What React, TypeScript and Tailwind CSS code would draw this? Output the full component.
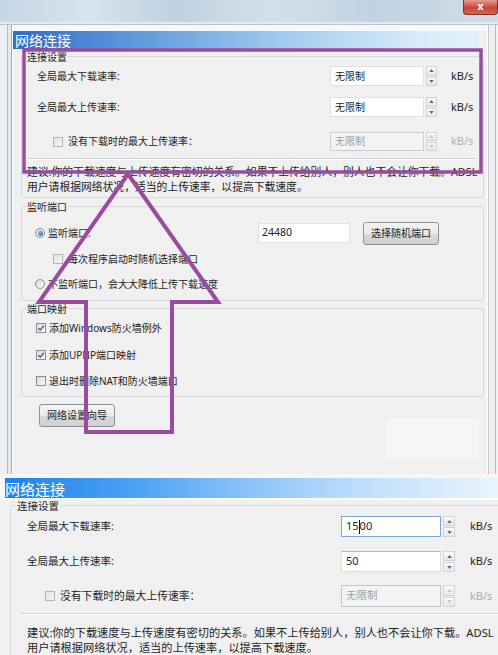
import React from "react";

const FONT = "font-['Noto_Sans','Noto_Sans_CJK_SC',sans-serif]";

function Check({ checked = false, disabled = false }: { checked?: boolean; disabled?: boolean }) {
  return (
    <span
      className={
        disabled
          ? "w-[10px] h-[10px] shrink-0 border border-[#b4b4b4] bg-[linear-gradient(135deg,#e2e2e2,#f6f6f6)] flex items-center justify-center"
          : "w-[10px] h-[10px] shrink-0 border border-[#8a8c8e] bg-[linear-gradient(135deg,#d8dadc,#fbfbfb)] flex items-center justify-center"
      }
    >
      {checked && (
        <svg viewBox="0 0 10 10" className="w-[8px] h-[8px]">
          <path d="M1.6 5.2 L4 7.6 L8.6 2.2" stroke="#35589a" strokeWidth="1.7" fill="none" />
        </svg>
      )}
    </span>
  );
}

function Radio({ checked = false }: { checked?: boolean }) {
  return (
    <span className="w-[10px] h-[10px] shrink-0 rounded-full border border-[#8a8c8e] bg-[linear-gradient(135deg,#d6d8da,#fbfbfb)] flex items-center justify-center">
      {checked && <span className="w-[5px] h-[5px] rounded-full bg-[radial-gradient(circle_at_35%_35%,#8ab4ee,#2b55a8)]" />}
    </span>
  );
}

function Spin({ h, w, disabled = false }: { h: string; w: string; disabled?: boolean }) {
  const arrow = disabled ? "#c4c4c4" : "#56688c";
  return (
    <div className={`${h} ${w} flex flex-col gap-[1px] shrink-0`}>
      <div className="flex-1 border border-[#cfd2d6] bg-[linear-gradient(#fbfbfb,#e6e7e9)] flex items-center justify-center">
        <svg viewBox="0 0 6 4" className="w-[5px] h-[3px]">
          <path d="M0 4 L3 0 L6 4 Z" fill={arrow} />
        </svg>
      </div>
      <div className="flex-1 border border-[#cfd2d6] bg-[linear-gradient(#fbfbfb,#e6e7e9)] flex items-center justify-center">
        <svg viewBox="0 0 6 4" className="w-[5px] h-[3px]">
          <path d="M0 0 L3 4 L6 0 Z" fill={arrow} />
        </svg>
      </div>
    </div>
  );
}

function TopShot() {
  return (
    <div className="h-[474px] flex flex-col">
      {/* glass title */}
      <div className="h-[22px] flex justify-end bg-[linear-gradient(90deg,#c4d6e5,#d8e4ee_18%,#bfd1e0_35%,#d3e0ea_55%,#c0d3e2_75%,#cfdde8)]">
        <div className="w-[35px] h-[15px] rounded-b-[4px] border border-t-0 border-[#7a3326] bg-[linear-gradient(#e49a8c,#c8463a_55%,#d8624f)] flex items-center justify-center text-white text-[10px] font-bold leading-none font-['DejaVu_Sans',sans-serif]">
          x
        </div>
      </div>
      <div className="h-[3px] bg-[#e3ebf2] border-b border-[#b9c3cc]" />
      <div className="flex-1 flex">
        {/* left frame */}
        <div className="w-[13px] flex">
          <div className="w-[7px] bg-[#eceff1]" />
          <div className="w-[1px] bg-[#b5bbc1]" />
          <div className="w-[3px] bg-[#e6e9ec]" />
          <div className="w-[1px] bg-[#a6acb2]" />
          <div className="w-[1px] bg-white" />
        </div>
        {/* content */}
        <div className="flex-1 flex flex-col bg-[#f0f0f0]">
          <div className="h-[6px] bg-[#f6f7f8]" />
          <div className="h-[18px] mr-[9px] bg-[linear-gradient(90deg,#2f6ec8,#5c97dc_25%,#9ac6ee_55%,#d4ebf9_85%,#e2f1fb)] flex items-center pl-[2px] text-white text-[14px] leading-none">
            网络连接
          </div>
          <div className={`flex-1 flex flex-col text-[10px] text-[#222] ${FONT}`}>
            {/* group 1 */}
            <div className="mt-[7px] ml-[8px] mr-[3px] border border-[#d5d9dd] rounded-[3px] flex flex-col">
              <div className="-mt-[7px] h-[14px] leading-[14px] ml-[4px] px-[1px] self-start bg-[#f0f0f0]">连接设置</div>
              <div className="mt-[2px] h-[20px] flex items-center pl-[15px]">
                <span className="w-[293px]">全局最大下载速率:</span>
                <div className="w-[94px] h-[20px] bg-white border border-[#e0e0e0] flex items-center pl-[4px]">无限制</div>
                <div className="ml-[2px]"><Spin h="h-[20px]" w="w-[11px]" /></div>
                <span className="ml-[14px] text-[11px]">kB/s</span>
              </div>
              <div className="mt-[11px] h-[20px] flex items-center pl-[15px]">
                <span className="w-[293px]">全局最大上传速率:</span>
                <div className="w-[94px] h-[20px] bg-white border border-[#e0e0e0] flex items-center pl-[4px]">无限制</div>
                <div className="ml-[2px]"><Spin h="h-[20px]" w="w-[11px]" /></div>
                <span className="ml-[14px] text-[11px]">kB/s</span>
              </div>
              <div className="mt-[15px] h-[19px] flex items-center pl-[31px]">
                <div className="w-[277px] flex items-center gap-[5px]">
                  <Check disabled />
                  <span>没有下载时的最大上传速率：</span>
                </div>
                <div className="w-[94px] h-[19px] bg-[#f3f3f3] border border-[#c9cccf] flex items-center pl-[4px] text-[#a0a0a0]">无限制</div>
                <div className="ml-[2px]"><Spin h="h-[19px]" w="w-[11px]" disabled /></div>
                <span className="ml-[14px] text-[11px] text-[#b0b0b0]">kB/s</span>
              </div>
              <div className="mt-[7px] ml-[5px] mr-[8px] border-t border-[#d3d3d3] border-b border-b-white" />
              <div className="mt-[4px] ml-[5px] leading-[15px] whitespace-nowrap text-[10.8px]">
                <div>建议:你的下载速度与上传速度有密切的关系。如果不上传给别人，别人也不会让你下载。ADSL</div>
                <div>用户请根据网络状况，适当的上传速率，以提高下载速度。</div>
              </div>
              <div className="h-[3px]" />
            </div>
            {/* group 2 */}
            <div className="mt-[8px] ml-[8px] mr-[3px] border border-[#d5d9dd] rounded-[3px] flex flex-col">
              <div className="-mt-[7px] h-[14px] leading-[14px] ml-[4px] px-[1px] self-start bg-[#f0f0f0]">监听端口</div>
              <div className="mt-[7px] h-[24px] flex items-center pl-[13px]">
                <div className="w-[223px] flex items-center gap-[3px]">
                  <Radio checked />
                  <span>监听端口:</span>
                </div>
                <div className="w-[92px] h-[20px] bg-white border border-[#e0e0e0] flex items-center pl-[3px] text-[10.5px]">24480</div>
                <div className="ml-[13px] w-[76px] h-[23px] rounded-[3px] border border-[#8e9194] bg-[linear-gradient(#f4f4f4,#e9e9e9_50%,#d9d9d9_51%,#d0d0d0)] flex items-center justify-center">
                  选择随机端口
                </div>
              </div>
              <div className="mt-[6px] h-[16px] flex items-center pl-[31px] gap-[5px]">
                <Check disabled />
                <span>每次程序启动时随机选择端口</span>
              </div>
              <div className="mt-[9px] h-[16px] flex items-center pl-[13px] gap-[3px]">
                <Radio />
                <span>不监听端口，会大大降低上传下载速度</span>
              </div>
              <div className="h-[8px]" />
            </div>
            {/* group 3 */}
            <div className="mt-[7px] ml-[8px] mr-[3px] border border-[#d5d9dd] rounded-[3px] flex flex-col">
              <div className="-mt-[7px] h-[14px] leading-[14px] ml-[4px] px-[1px] self-start bg-[#f0f0f0]">端口映射</div>
              <div className="mt-[4px] h-[16px] flex items-center pl-[14px] gap-[3px]">
                <Check checked />
                <span>添加Windows防火墙例外</span>
              </div>
              <div className="mt-[11px] h-[16px] flex items-center pl-[14px] gap-[3px]">
                <Check checked />
                <span>添加UPNP端口映射</span>
              </div>
              <div className="mt-[10px] h-[16px] flex items-center pl-[14px] gap-[3px]">
                <Check />
                <span>退出时删除NAT和防火墙端口</span>
              </div>
              <div className="h-[7px]" />
            </div>
            <div className="mt-[7px] ml-[26px] w-[76px] h-[23px] rounded-[3px] border border-[#8e9194] bg-[linear-gradient(#f4f4f4,#e9e9e9_50%,#d9d9d9_51%,#d0d0d0)] flex items-center justify-center">
              网络设置向导
            </div>
          </div>
        </div>
        {/* right frame */}
        <div className="w-[11px] flex">
          <div className="w-[1px] bg-white" />
          <div className="w-[1px] bg-[#c7cbcf]" />
          <div className="w-[6px] bg-[#eef0f2]" />
          <div className="w-[1px] bg-[#b5bbc1]" />
          <div className="w-[2px] bg-[#f0f2f4]" />
        </div>
      </div>
    </div>
  );
}

function BottomShot() {
  return (
    <div className="flex-1 flex flex-col bg-[#f0f0f0]">
      <div className="h-[4px] bg-[#f7f7f7]" />
      <div className="h-[20px] flex">
        <div className="w-[5px] bg-[#f7f7f7]" />
        <div className="flex-1 bg-[linear-gradient(90deg,#1c82ee,#4aa0f4_25%,#8cc4f8_50%,#c4e1fb_75%,#e9f4fd)] flex items-center text-white text-[15px] leading-none">
          网络连接
        </div>
      </div>
      <div className="h-[2px] bg-white" />
      <div className={`flex-1 flex flex-col text-[10.5px] text-[#1e1e1e] ${FONT}`}>
        <div className="mt-[5px] ml-[10px] border border-r-0 border-b-0 border-[#d5d9dd] rounded-tl-[3px] flex flex-col">
          <div className="-mt-[7px] h-[14px] leading-[14px] ml-[5px] px-[1px] self-start bg-[#f0f0f0]">连接设置</div>
          <div className="mt-[3px] h-[21px] flex items-center pl-[16px]">
            <span className="w-[314px]">全局最大下载速率:</span>
            <div className="w-[100px] h-[21px] bg-white border border-[#7aa7d8] flex items-center pl-[4px] text-[11px]">
              15<span className="w-[1px] h-[14px] bg-[#111]" />00
            </div>
            <div className="ml-[2px]"><Spin h="h-[21px]" w="w-[12px]" /></div>
            <span className="ml-[15px] text-[11px]">kB/s</span>
          </div>
          <div className="mt-[14px] h-[21px] flex items-center pl-[16px]">
            <span className="w-[314px]">全局最大上传速率:</span>
            <div className="w-[100px] h-[21px] bg-white border border-[#dadde2] border-t-[#b5b8bd] flex items-center pl-[4px] text-[11px]">50</div>
            <div className="ml-[2px]"><Spin h="h-[21px]" w="w-[12px]" /></div>
            <span className="ml-[15px] text-[11px]">kB/s</span>
          </div>
          <div className="mt-[13px] h-[22px] flex items-center pl-[34px]">
            <div className="w-[296px] flex items-center gap-[5px]">
              <Check disabled />
              <span className="text-[10.8px]">没有下载时的最大上传速率：</span>
            </div>
            <div className="w-[100px] h-[22px] bg-[#f3f3f3] border border-[#c3c6c9] flex items-center pl-[4px] text-[#a0a0a0]">无限制</div>
            <div className="ml-[2px]"><Spin h="h-[22px]" w="w-[12px]" disabled /></div>
            <span className="ml-[15px] text-[11px] text-[#aaaaaa]">kB/s</span>
          </div>
          <div className="mt-[6px] ml-[9px] border-t border-[#cfcfcf] border-b border-b-white" />
          <div className="mt-[10px] ml-[16px] leading-[15px] whitespace-nowrap text-[11.2px]">
            <div>建议:你的下载速度与上传速度有密切的关系。如果不上传给别人，别人也不会让你下载。ADSL</div>
            <div>用户请根据网络状况，适当的上传速率，以提高下载速度。</div>
          </div>
        </div>
      </div>
    </div>
  );
}

export default function App() {
  return (
    <div className="relative w-[498px] h-[655px] overflow-hidden bg-[#f0f0f0] flex flex-col font-['Noto_Sans_CJK_SC',sans-serif]">
      <TopShot />
      <BottomShot />
      <div className="absolute left-[385px] top-[418px] w-[95px] h-[42px] rounded-[6px] bg-[#f6f6f6] blur-[2px]" />
      <svg className="absolute left-0 top-0 w-[498px] h-[655px] pointer-events-none" viewBox="0 0 498 655">
        <rect x="24" y="50" width="457" height="122" fill="none" stroke="#9a4b9f" strokeWidth="3.5" />
        <polygon
          points="128,174 218,302 172,302 172,432 86,432 86,302 39,302"
          fill="none"
          stroke="#9a4b9f"
          strokeWidth="4"
          strokeLinejoin="miter"
        />
      </svg>
    </div>
  );
}
